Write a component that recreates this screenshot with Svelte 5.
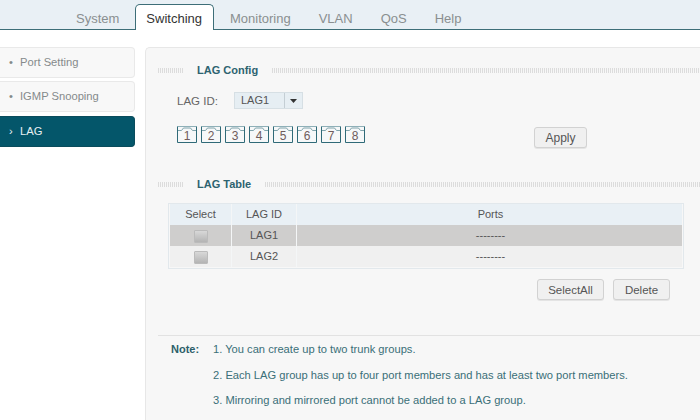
<script>
  const tabs = ['System', 'Switching', 'Monitoring', 'VLAN', 'QoS', 'Help'];
  const ports = [1, 2, 3, 4, 5, 6, 7, 8];
  const side = [
    { label: 'Port Setting', mark: '•' },
    { label: 'IGMP Snooping', mark: '•' },
    { label: 'LAG', mark: '›', active: true }
  ];
  const rows = ['LAG1', 'LAG2'];
  const notes = [
    '1. You can create up to two trunk groups.',
    '2. Each LAG group has up to four port members and has at least two port members.',
    '3. Mirroring and mirrored port cannot be added to a LAG group.'
  ];
</script>

<div class="page">
  <nav class="topbar">
    {#each tabs as t}
      <div class="tab" class:on={t === 'Switching'}>{t}</div>
    {/each}
  </nav>
  <div class="body">
    <aside class="side">
      {#each side as s}
        <div class="item" class:active={s.active}><span class="mark">{s.mark}</span>{s.label}</div>
      {/each}
    </aside>
    <main class="panel">
      <div class="title first"><i class="dots short"></i><b>LAG Config</b><i class="dots"></i></div>
      <div class="form">
        <div class="left">
          <div class="idrow">
            <span class="idlabel">LAG ID:</span>
            <div class="select"><span class="val">LAG1</span><span class="arrow"><svg width="7" height="4" viewBox="0 0 7 4"><path d="M0 0h7L3.500 4z" fill="#333"/></svg></span></div>
          </div>
          <div class="ports">
            {#each ports as p}
              <div class="port">
                <svg width="20" height="17" viewBox="0 0 20 17"><path d="M.5 16.500V.5h19v16z" fill="#f6f8f9" stroke="#2f6a78"/><path d="M.5 .5h19" stroke="#8fb0b8"/><path d="M1 4.500h3.500l2-2.500h7l2 2.500H19" fill="none" stroke="#7fa3ab"/></svg>
                <span>{p}</span>
              </div>
            {/each}
          </div>
        </div>
        <button class="btn apply">Apply</button>
      </div>
      <div class="title second"><i class="dots short"></i><b>LAG Table</b><i class="dots"></i></div>
      <div class="tablewrap">
        <div class="row head"><div>Select</div><div>LAG ID</div><div>Ports</div></div>
        {#each rows as r, i}
          <div class="row" class:dark={i === 0} class:light={i === 1}>
            <div><span class="check"></span></div><div>{r}</div><div class="dash">--------</div>
          </div>
        {/each}
      </div>
      <div class="actions">
        <button class="btn selectall">SelectAll</button>
        <button class="btn del">Delete</button>
      </div>
      <div class="note">
        <b>Note:</b>
        <div class="lines">
          {#each notes as n}<p>{n}</p>{/each}
        </div>
      </div>
    </main>
  </div>
</div>

<style>
  :global(body) { margin: 0; background: #fff; }
  .page { width: 700px; height: 420px; overflow: hidden; font-family: "Liberation Sans", Arial, sans-serif; font-size: 11px; color: #555; background: #fff; }
  .topbar { height: 29px; display: flex; align-items: flex-end; padding-left: 62px; background: #e9f0f5; border-bottom: 1px solid #3d6e78; }
  .tab { font-size: 13px; color: #8a8f90; padding: 0 14px; height: 24px; line-height: 27px; }
  .tab.on { color: #333; background: #fff; border: 1px solid #3d6e78; border-bottom: 0; border-radius: 5px 5px 0 0; height: 25px; margin: 0 2px -1px; padding: 0 11px 0 10px; line-height: 28px; }
  .body { display: flex; padding-top: 17px; }
  .side { width: 135px; display: flex; flex-direction: column; gap: 3px; margin-right: 10px; }
  .item { height: 31px; line-height: 29px; box-sizing: border-box; font-size: 11.200px; background: #f8f8f8; border: 1px solid #e9e9e9; border-left: 0; border-radius: 0 4px 4px 0; color: #858a8b; padding-left: 9px; }
  .item:nth-child(2) { margin-bottom: 1px; }
  .mark { display: inline-block; width: 11px; }
  .item.active { background: #04566a; border-color: #0a4c5c; color: #e8f0f2; }
  .panel { flex: 1; height: 400px; background: #f7f7f7; border: 1px solid #e7e7e7; border-right: 0; border-radius: 5px 0 0 0; box-sizing: border-box; padding-left: 12px; }
  .title { display: flex; align-items: center; height: 14px; }
  .title b { font-size: 11px; color: #2d6370; margin: 0 14px; }
  .first { margin-top: 15px; }
  .second { margin-top: 22px; }
  .dots { flex: 1; height: 5px; background: repeating-linear-gradient(90deg, #dcdcdc 0 1px, transparent 1px 2px); }
  .dots.short { flex: 0 0 25px; }
  .form { display: flex; justify-content: space-between; align-items: flex-start; box-sizing: border-box; padding: 15px 113px 0 19px; height: 78px; }
  .left { display: flex; flex-direction: column; flex: 1; }
  .idrow { display: flex; align-items: center; height: 17px; }
  .idlabel { width: 57px; font-size: 11.500px; color: #666; }
  .select { width: 69px; height: 17px; box-sizing: border-box; display: flex; background: #e6eef3; border: 1px solid #d6dfe4; }
  .val { flex: 1; padding-left: 6px; line-height: 15px; color: #555; }
  .arrow { width: 17px; border-left: 1px solid #c4ced4; display: flex; align-items: center; justify-content: center; }
  .ports { display: flex; gap: 4px; margin-top: 17px; }
  .port { position: relative; width: 20px; height: 17px; }
  .port svg { display: block; }
  .port span { position: absolute; left: 0; right: 0; bottom: 1px; text-align: center; font-size: 12px; line-height: 12px; color: #6f5c5c; }
  .btn { font-family: inherit; font-size: 11.500px; color: #555; background: #f0f0f0; border: 1px solid #d2d2d2; border-radius: 3px; height: 21px; padding: 0; box-shadow: 0 1px 0 #e4e4e4; }
  .apply { width: 53px; margin-top: 35px; font-size: 12px; }
  .tablewrap { margin: 12px 16px 0 10px; padding: 0 1px 1px; border: 1px solid #e2e8ec; }
  .row { display: grid; grid-template-columns: 62px 65px 1fr; height: 21px; line-height: 21px; text-align: center; color: #555; }
  .row > div { border-right: 1px solid #f4f6f7; }
  .row > div:last-child { border: 0; padding-left: 2px; }
  .head { background: #e9f0f5; }
  .dark { background: #cfcecd; }
  .light { background: #f0f0f0; }
  .check { display: inline-block; vertical-align: middle; width: 14px; height: 13px; background: linear-gradient(#d8d8d8, #b4b4b4); border: 1px solid #bbb; box-sizing: border-box; border-radius: 1px; }
  .actions { display: flex; justify-content: flex-end; gap: 9px; margin: 10px 30px 0 0; }
  .selectall { width: 67px; }
  .del { width: 57px; }
  .note { display: flex; margin-top: 35px; border-top: 1px solid #e2e2e2; padding: 5px 0 0 13px; }
  .note b { width: 42px; font-size: 11px; line-height: 16px; color: #2d5f6a; }
  .lines p { margin: 0 0 9.500px; line-height: 16px; font-size: 11.150px; color: #3a6f78; }
</style>
